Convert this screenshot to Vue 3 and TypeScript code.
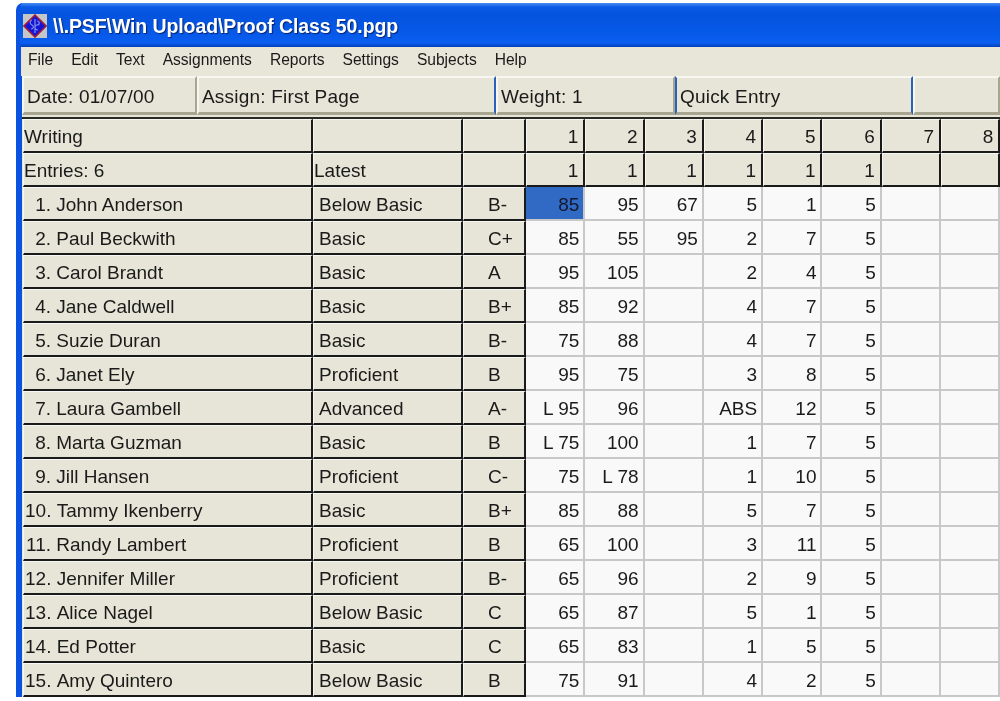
<template>
  <div class="window">
    <div class="titlebar">
      <svg class="app-icon" width="24" height="24" viewBox="0 0 24 24">
        <rect width="24" height="24" fill="#c6c6c6" />
        <path d="M12 1 23 12 12 23 1 12Z" fill="#1414d8" stroke="#a01c3c" stroke-width="1.6" />
        <path d="M9 6c-3 1-2 4 0 5s2 4-1 4M14 7c3 0 3 4 0 4s-3 5 1 5M12 5v14" fill="none" stroke="#8090ea" stroke-width="1.2" />
      </svg>
      <span class="title-text">\\.PSF\Win Upload\Proof Class 50.pgp</span>
    </div>
    <div class="menubar">
      <span v-for="m in menus" :key="m">{{ m }}</span>
    </div>
    <div class="toolbar">
      <div class="tool date">Date: 01/07/00</div>
      <div class="tool assign">Assign: First Page</div>
      <div class="tool weight">Weight: 1</div>
      <div class="tool quick">Quick Entry</div>
      <div class="tool rest"></div>
    </div>
    <div class="sheet">
      <div class="cell head">Writing</div>
      <div class="cell head"></div>
      <div class="cell head"></div>
      <div v-for="n in 8" :key="'h' + n" class="cell head num">{{ n }}</div>

      <div class="cell head">Entries: 6</div>
      <div class="cell head">Latest</div>
      <div class="cell head"></div>
      <div v-for="n in 8" :key="'w' + n" class="cell head num">{{ n <= 6 ? 1 : "" }}</div>

      <template v-for="(s, i) in students" :key="s.name">
        <div class="cell head name">
          <span class="idx">{{ i + 1 }}.</span>&nbsp;{{ s.name }}
        </div>
        <div class="cell head level">{{ s.level }}</div>
        <div class="cell head grade">{{ s.grade }}</div>
        <div
          v-for="(v, j) in fill(s.scores)"
          :key="j"
          class="cell score"
          :class="{ active: i === 0 && j === 0 }"
        >
          {{ v }}
        </div>
      </template>
    </div>
  </div>
</template>

<script setup lang="ts">
interface Student {
  name: string;
  level: string;
  grade: string;
  scores: string[];
}

const menus = ["File", "Edit", "Text", "Assignments", "Reports", "Settings", "Subjects", "Help"];

const row = (name: string, level: string, grade: string, line: string): Student => ({
  name,
  level,
  grade,
  scores: line.split(","),
});

const students: Student[] = [
  row("John Anderson", "Below Basic", "B-", "85,95,67,5,1,5"),
  row("Paul Beckwith", "Basic", "C+", "85,55,95,2,7,5"),
  row("Carol Brandt", "Basic", "A", "95,105,,2,4,5"),
  row("Jane Caldwell", "Basic", "B+", "85,92,,4,7,5"),
  row("Suzie Duran", "Basic", "B-", "75,88,,4,7,5"),
  row("Janet Ely", "Proficient", "B", "95,75,,3,8,5"),
  row("Laura Gambell", "Advanced", "A-", "L 95,96,,ABS,12,5"),
  row("Marta Guzman", "Basic", "B", "L 75,100,,1,7,5"),
  row("Jill Hansen", "Proficient", "C-", "75,L 78,,1,10,5"),
  row("Tammy Ikenberry", "Basic", "B+", "85,88,,5,7,5"),
  row("Randy Lambert", "Proficient", "B", "65,100,,3,11,5"),
  row("Jennifer Miller", "Proficient", "B-", "65,96,,2,9,5"),
  row("Alice Nagel", "Below Basic", "C", "65,87,,5,1,5"),
  row("Ed Potter", "Basic", "C", "65,83,,1,5,5"),
  row("Amy Quintero", "Below Basic", "B", "75,91,,4,2,5"),
];

const fill = (scores: string[]) => [...scores, "", ""];
</script>

<style>
html,
body {
  background: #fff;
  overflow: hidden;
}
</style>

<style scoped>
.window {
  width: 984px;
  height: 694px;
  margin: 3px 0 0 16px;
  box-sizing: border-box;
  border-left: 4px solid #0a52e0;
  border-radius: 7px 0 0 0;
  background: #0a52e0;
  overflow: hidden;
  font-family: "Liberation Sans", Arial, sans-serif;
  color: #1a1a1a;
  filter: blur(0.35px);
}

.titlebar {
  height: 44px;
  margin-left: -4px;
  padding: 2px 0 0 7px;
  box-sizing: border-box;
  display: flex;
  align-items: center;
  gap: 6px;
  background: linear-gradient(#4a8cf0 0, #0a5ae6 4px, #0453de 12px, #0659e8 30px, #0a5ef0 40px, #0440b8 44px);
}

.app-icon {
  flex: none;
}

.title-text {
  color: #fff;
  font: bold 19.5px "Liberation Sans", Arial, sans-serif;
  letter-spacing: -0.1px;
  text-shadow: 1px 1px 1px #06236e;
  white-space: nowrap;
}

.menubar {
  height: 29px;
  margin-left: 1px;
  padding: 0 0 3px 7px;
  box-sizing: border-box;
  display: flex;
  align-items: center;
  gap: 18px;
  background: #e8e6d8;
  font-size: 15.6px;
}

.toolbar {
  height: 41px;
  margin-left: 2px;
  display: flex;
  font-size: 19px;
  letter-spacing: 0.2px;
  background: #e8e6d8;
}

.tool {
  box-sizing: border-box;
  height: 39px;
  padding: 8px 0 0 3px;
  background: #e6e5d7;
  border-top: 2px solid #f7f7f2;
  border-left: 2px solid #f7f7f2;
  border-right: 2px solid #a8a590;
  border-bottom: 3px solid #a8a590;
  white-space: nowrap;
}

.date {
  width: 175px;
}

.assign {
  width: 299px;
  border-right-color: #2a62b8;
}

.weight {
  width: 179px;
}

.quick {
  width: 238px;
  border-left-color: #2a62b8;
  border-right-color: #2a62b8;
}

.rest {
  flex: 1;
}

.sheet {
  display: grid;
  grid-template-columns: 290px 150px 63px repeat(8, 59.3px);
  grid-auto-rows: 34px;
  padding-left: 1px;
  border-top: 2px solid #2a2a24;
  margin-left: 2px;
  background: #e8e6d8;
  font-size: 19px;
}

.cell {
  box-sizing: border-box;
  display: flex;
  align-items: center;
  padding-top: 3px;
  white-space: nowrap;
  border-right: 2px solid #1a1a1a;
  border-bottom: 2px solid #1a1a1a;
}

.head {
  background: #e6e5d7;
  border-top: 1px solid #f7f7f2;
  border-left: 1px solid #f7f7f2;
}

.num {
  justify-content: flex-end;
  padding-right: 5px;
}

.name {
  padding-left: 1px;
}

.idx {
  display: inline-block;
  min-width: 26px;
  text-align: right;
}

.level {
  padding-left: 5px;
}

.grade {
  padding-left: 24px;
}

.score {
  justify-content: flex-end;
  padding-right: 4px;
  background: #f9f9f9;
  border-right-color: #c8c8c8;
  border-bottom-color: #c8c8c8;
}

.active {
  background: #316ac5;
  color: #14182c;
}
</style>
